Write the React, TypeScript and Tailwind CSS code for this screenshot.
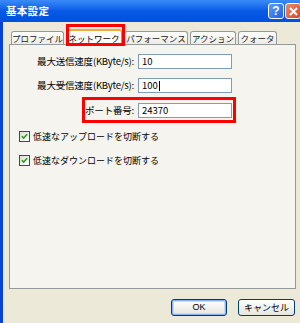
import React from "react";

const TABS = [
  { label: "プロファイル", w: "w-[53px]" },
  { label: "ネットワーク", w: "w-[56px]", active: true },
  { label: "パフォーマンス", w: "w-[64px]" },
  { label: "アクション", w: "w-[46px]" },
  { label: "クォータ", w: "w-[39px]" },
];

const Field = ({ label, value, caret }: { label: string; value: string; caret?: boolean }) => (
  <div className="flex items-center h-[15px]">
    <div className="w-[126px] pr-[2px] text-right text-[9.5px] leading-none whitespace-nowrap tracking-[-0.2px]">{label}</div>
    <div className="ml-[2px] w-[94px] h-[15px] border border-[#7F9DB9] bg-white flex items-center px-[3px] text-[9.5px] leading-none">
      {value}
      {caret && <span className="ml-[1px] w-px h-[10px] bg-black" />}
    </div>
  </div>
);

const Check = ({ label }: { label: string }) => (
  <div className="flex items-center h-[11px] pl-[9px]">
    <div className="w-[11px] h-[11px] border border-[#1C5180] bg-gradient-to-br from-[#DCDCD7] to-white flex items-center justify-center">
      <svg width="7" height="7" viewBox="0 0 7 7">
        <path d="M0.8 3.2 L2.6 5 L6.2 1.2" stroke="#21A121" strokeWidth="1.6" fill="none" />
      </svg>
    </div>
    <span className="ml-[3px] text-[9px] leading-none whitespace-nowrap">{label}</span>
  </div>
);

export default function App() {
  return (
    <div className="relative w-[300px] h-[323px] overflow-hidden bg-[#ECE9D8] flex flex-col font-['Noto_Sans_CJK_JP',sans-serif] text-black">
      {/* title bar */}
      <div className="h-[22px] shrink-0 bg-gradient-to-b from-[#3A8BF7] via-[#0759E6] to-[#0051DD] flex items-center pl-[6px]">
        <span className="text-white font-bold text-[10.5px] leading-none tracking-[0.3px]">基本設定</span>
        <div className="ml-auto flex gap-[1px] mr-[-1px]">
          <div className="w-[16px] h-[16px] rounded-[3px] border border-white bg-gradient-to-br from-[#5C9BFF] to-[#1E5FE3] flex items-center justify-center text-white font-bold text-[12px] leading-none font-['Liberation_Sans',sans-serif]">?</div>
          <div className="w-[16px] h-[16px] rounded-[3px] border border-white bg-gradient-to-br from-[#EE8A6B] to-[#D8441F] flex items-center justify-center">
            <svg width="9" height="9" viewBox="0 0 9 9">
              <path d="M1 1 L8 8 M8 1 L1 8" stroke="white" strokeWidth="2" />
            </svg>
          </div>
        </div>
      </div>

      {/* body */}
      <div className="flex-1 flex flex-col border-l-[3px] border-[#0842D9] pl-[6px] pr-[4px]">
        {/* tabs */}
        <div className="flex items-end h-[22px] pl-[2px] gap-[2px]">
          {TABS.map((t) =>
            t.active ? (
              <div
                key={t.label}
                className={`${t.w} h-[16px] -mb-px relative z-10 bg-[#FCFCFE] border border-b-0 border-[#919B9C] rounded-t-[3px] border-t-[2px] border-t-[#F2A83A] flex items-center justify-center text-[8.5px] leading-none whitespace-nowrap`}
              >
                {t.label}
              </div>
            ) : (
              <div
                key={t.label}
                className={`${t.w} h-[13px] bg-gradient-to-b from-white to-[#ECEBE5] border border-b-0 border-[#919B9C] rounded-t-[3px] flex items-center justify-center text-[8.5px] leading-none whitespace-nowrap text-[#222]`}
              >
                {t.label}
              </div>
            )
          )}
        </div>

        {/* panel */}
        <div className="h-[245px] border border-[#919B9C] bg-[#F5F4EF] flex flex-col pt-[9px]">
          <Field label="最大送信速度(KByte/s):" value="10" />
          <div className="h-[9px]" />
          <Field label="最大受信速度(KByte/s):" value="100" caret />
          <div className="h-[10px]" />
          <Field label="ポート番号:" value="24370" />
          <div className="h-[13px]" />
          <Check label="低速なアップロードを切断する" />
          <div className="h-[13px]" />
          <Check label="低速なダウンロードを切断する" />
        </div>

        {/* buttons */}
        <div className="flex justify-end gap-[11px] mt-[10px] pr-[1px]">
          <button className="w-[56px] h-[17px] rounded-[3px] border border-[#003C74] bg-gradient-to-b from-white to-[#E6E5DE] shadow-[inset_0_0_0_1px_#8DB2F1,inset_0_0_0_2px_#C8DAF8] text-[9px] leading-none font-['Liberation_Sans',sans-serif]">
            OK
          </button>
          <button className="w-[57px] h-[17px] rounded-[3px] border border-[#003C74] bg-gradient-to-b from-white to-[#E6E5DE] text-[9px] leading-none">
            キャンセル
          </button>
        </div>
      </div>

      {/* annotation boxes */}
      <div className="absolute left-[66px] top-[24px] w-[59px] h-[22px] border-[3px] border-[#FF0000] pointer-events-none z-20" />
      <div className="absolute left-[82px] top-[97px] w-[154px] h-[26px] border-[3px] border-[#FF0000] pointer-events-none z-20" />
    </div>
  );
}
